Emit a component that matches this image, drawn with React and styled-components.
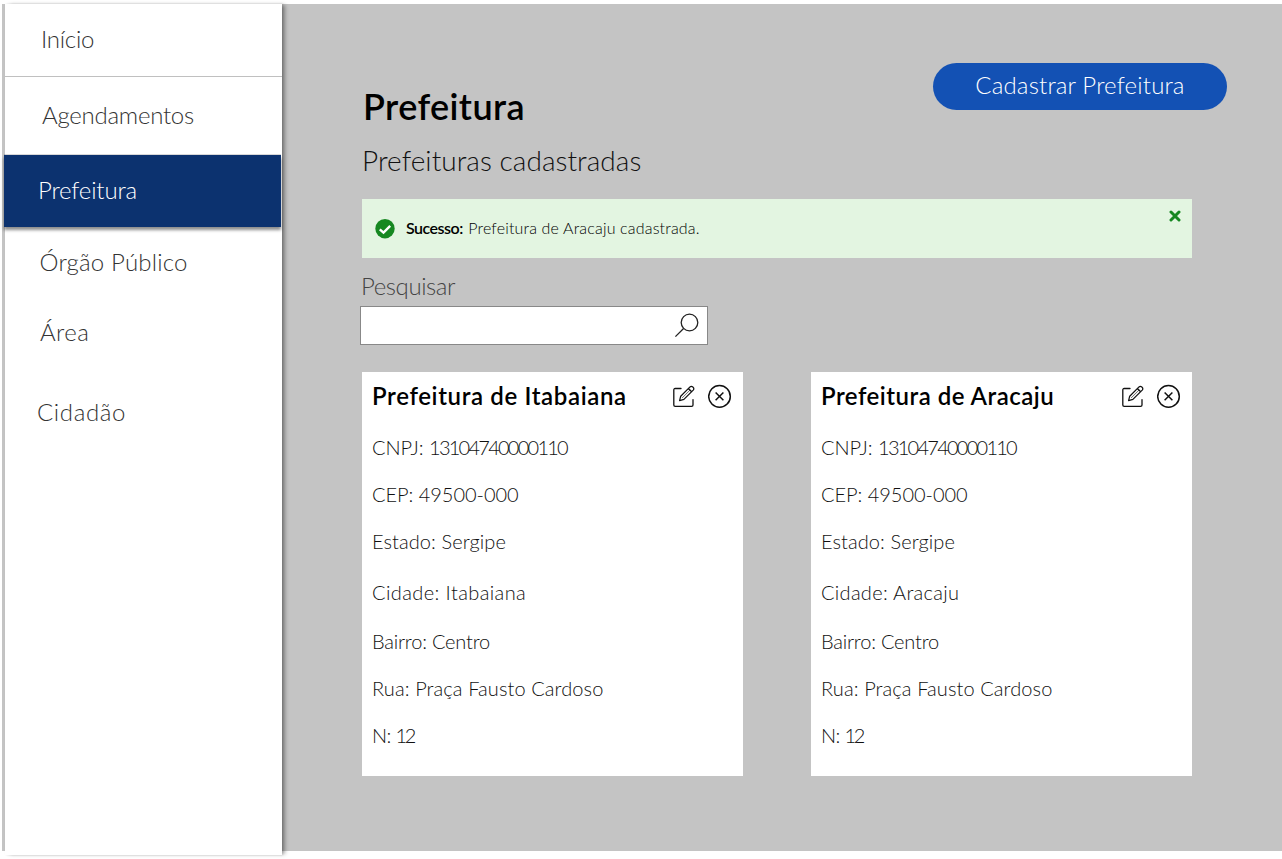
import React from "react";
import styled, { createGlobalStyle } from "styled-components";

const GlobalStyle = createGlobalStyle`
  *, *::before, *::after { box-sizing: border-box; }
  body {
    margin: 0;
    background: #fff;
    font-family: Lato, "Open Sans", sans-serif;
    font-weight: 300;
    color: #000;
  }
  h1, h2, h3, p, ul { margin: 0; padding: 0; }
  button { border: 0; padding: 0; background: none; font: inherit; color: inherit; cursor: pointer; }
`;

const Page = styled.div`
  height: 859px;
  padding: 4px 0 8px 2px;
  overflow: hidden;
`;

const Shell = styled.div`
  display: flex;
  height: 847px;
  padding-left: 3px;
  background: #c4c4c4;
`;

const Sidebar = styled.nav`
  flex: none;
  width: 277px;
  height: 851px;
  background: #fff;
  box-shadow: 4px 0 4px -1px rgba(0, 0, 0, 0.35), 1px 0 2px rgba(0, 0, 0, 0.12);
`;

const NavItem = styled.a`
  display: block;
  height: ${(p) => p.$height}px;
  padding: ${(p) => p.$top}px 0 0 ${(p) => p.$left}px;
  font-size: 24px;
  line-height: 30px;
  letter-spacing: ${(p) => p.$spacing}px;
  white-space: nowrap;
  color: #333;
  ${(p) => p.$divided && "border-bottom: 1px solid #c0c0c0;"}
  ${(p) =>
    p.$active &&
    `
    margin: 0 1px 0 -1px;
    color: #fff;
    background: #0c326f;
    box-shadow: 0 3px 3px rgba(0, 0, 0, 0.45), 0 -1px 0 rgba(0, 0, 0, 0.15);
  `}
`;

const Main = styled.main`
  flex: 1;
  padding: 59px 90px 0 80px;
`;

const Header = styled.header`
  display: flex;
  justify-content: space-between;
  height: 136px;
  margin-right: -35px;
`;

const Title = styled.h1`
  padding: 21px 0 0 1px;
  font-size: 36px;
  font-weight: 600;
  line-height: 44px;
  letter-spacing: 0.4px;
`;

const Subtitle = styled.h2`
  padding-top: 15px;
  font-size: 28px;
  font-weight: 300;
  line-height: 34px;
  letter-spacing: 0.05px;
  color: #111;
`;

const RegisterButton = styled.button`
  width: 294px;
  height: 47px;
  padding-bottom: 4px;
  border-radius: 24px;
  background: #1351b4;
  color: #fff;
  font-size: 24px;
  letter-spacing: 0.16px;
`;

const Alert = styled.div`
  display: flex;
  align-items: center;
  height: 59px;
  padding: 0 11px 0 13px;
  background: #e3f5e1;
  font-size: 16px;
  line-height: 20px;
`;

const AlertText = styled.p`
  flex: 1;
  padding: 0 0 1px 11px;
  letter-spacing: 0.17px;
`;

const Strong = styled.strong`
  margin-right: 1px;
  font-weight: 600;
  letter-spacing: -0.5px;
`;

const CloseButton = styled.button`
  align-self: flex-start;
  display: flex;
  margin-top: 11px;
`;

const SearchLabel = styled.label`
  display: block;
  padding: 13px 0 5px;
  margin-left: -1px;
  font-size: 24px;
  line-height: 30px;
  letter-spacing: -0.42px;
  color: #444;
`;

const SearchBox = styled.div`
  display: flex;
  align-items: center;
  justify-content: flex-end;
  width: 348px;
  height: 39px;
  margin-left: -2px;
  padding: 0 7px 2px 0;
  border: 1px solid #888;
  background: #fff;
`;

const Cards = styled.div`
  display: flex;
  gap: 68px;
  margin-top: 27px;
`;

const Card = styled.article`
  width: 381px;
  height: 404px;
  padding: 9px 11px 0 10px;
  background: #fff;
`;

const CardHeader = styled.div`
  display: flex;
  align-items: center;
  height: 30px;
`;

const CardTitle = styled.h3`
  flex: 1;
  font-size: 24px;
  font-weight: 600;
  line-height: 30px;
  letter-spacing: ${(p) => p.$spacing}px;
  white-space: nowrap;
`;

const Actions = styled.div`
  display: flex;
  align-items: center;
  gap: 13px;
`;

const IconButton = styled.button`
  display: flex;
`;

const Fields = styled.ul`
  padding-top: 1px;
  list-style: none;
`;

const Field = styled.li`
  padding-top: ${(p) => p.$gap}px;
  font-size: 20px;
  line-height: 24px;
  letter-spacing: ${(p) => p.$spacing}px;
  white-space: nowrap;
  color: #111;
`;

const Value = styled.span`
  letter-spacing: ${(p) => p.$spacing}px;
`;

const CheckIcon = () => (
  <svg width="20" height="20" viewBox="0 0 20 20">
    <circle cx="10" cy="9.7" r="9.7" fill="#168821" />
    <path d="M4.8 10.3 8.5 13.7 15.2 6.9" fill="none" stroke="#fff" strokeWidth="2.4" />
  </svg>
);

const CrossIcon = () => (
  <svg width="12" height="12" viewBox="0 0 12 12">
    <path d="M2 2 10 10M10 2 2 10" stroke="#168821" strokeWidth="3" strokeLinecap="round" />
  </svg>
);

const SearchIcon = () => (
  <svg width="26" height="26" viewBox="0 0 26 26" fill="none" stroke="#222" strokeWidth="1.3">
    <circle cx="15.5" cy="10.5" r="8.3" />
    <path d="M9.6 16.5 1.4 24.6" />
  </svg>
);

const EditIcon = () => (
  <svg width="22" height="24" viewBox="0 0 22 24" fill="none" stroke="#111" strokeWidth="1.3" strokeLinejoin="round" strokeLinecap="round">
    <path d="M8 4.5H2.2Q.8 4.5.8 5.9V21Q.8 22.4 2.2 22.4H18.6Q20 22.4 20 21V15.6" />
    <path d="M6.6 16.6 7.7 12.2 17 2.9Q18.4 1.8 19.8 3L20.2 3.4Q21.4 4.7 20.2 6.1L10.9 15.4ZM15.4 4.5 18.6 7.7" strokeWidth="1.25" />
    <path d="M9.4 13.7 17 6.1" strokeWidth=".6" />
  </svg>
);

const RemoveIcon = () => (
  <svg width="24" height="24" viewBox="0 0 24 24" fill="none" stroke="#111" strokeWidth="1.5">
    <circle cx="11.5" cy="12.4" r="10.8" />
    <path d="M7.6 8.5 15.4 16.3M15.4 8.5 7.6 16.3" />
  </svg>
);

const navItems = [
  { label: "Início", height: 73, top: 20, left: 36, spacing: -0.25, divided: true },
  { label: "Agendamentos", height: 78, top: 23, left: 37, spacing: -0.26 },
  { label: "Prefeitura", height: 72, top: 20, left: 34, spacing: -0.18, active: true },
  { label: "Órgão Público", height: 70, top: 20, left: 34.5, spacing: 0.18 },
  { label: "Área", height: 75, top: 20, left: 35, spacing: 0.4 },
  { label: "Cidadão", height: 70, top: 25, left: 32, spacing: 0.63 },
];

const cards = [
  { city: "Itabaiana", titleSpacing: 0.64, citySpacing: 0.4 },
  { city: "Aracaju", titleSpacing: 0.49, citySpacing: 0.3 },
];

const fieldsFor = ({ city, citySpacing }) => [
  { label: "CNPJ:", value: "13104740000110", gap: 23, spacing: 0, valueSpacing: -1.75 },
  { label: "CEP:", value: "49500-000", gap: 23, spacing: -0.04 },
  { label: "Estado:", value: "Sergipe", gap: 23, spacing: 0.08 },
  { label: "Cidade:", value: city, gap: 27, spacing: citySpacing },
  { label: "Bairro:", value: "Centro", gap: 25, spacing: -0.2 },
  { label: "Rua:", value: "Praça Fausto Cardoso", gap: 23, spacing: 0.1 },
  { label: "N:", value: "12", gap: 23, spacing: -0.6, valueSpacing: -2.4 },
];

const PrefeituraCard = ({ data }) => (
  <Card>
    <CardHeader>
      <CardTitle $spacing={data.titleSpacing}>Prefeitura de {data.city}</CardTitle>
      <Actions>
        <IconButton aria-label="Editar"><EditIcon /></IconButton>
        <IconButton aria-label="Remover"><RemoveIcon /></IconButton>
      </Actions>
    </CardHeader>
    <Fields>
      {fieldsFor(data).map((f) => (
        <Field key={f.label} $gap={f.gap} $spacing={f.spacing}>
          {f.label} <Value $spacing={f.valueSpacing ?? f.spacing}>{f.value}</Value>
        </Field>
      ))}
    </Fields>
  </Card>
);

export default function App() {
  return (
    <>
      <GlobalStyle />
      <Page>
        <Shell>
          <Sidebar>
            {navItems.map((item) => (
              <NavItem
                key={item.label}
                $height={item.height}
                $top={item.top}
                $left={item.left}
                $spacing={item.spacing}
                $divided={item.divided}
                $active={item.active}
              >
                {item.label}
              </NavItem>
            ))}
          </Sidebar>
          <Main>
            <Header>
              <div>
                <Title>Prefeitura</Title>
                <Subtitle>Prefeituras cadastradas</Subtitle>
              </div>
              <RegisterButton>Cadastrar Prefeitura</RegisterButton>
            </Header>
            <Alert>
              <CheckIcon />
              <AlertText>
                <Strong>Sucesso:</Strong> Prefeitura de Aracaju cadastrada.
              </AlertText>
              <CloseButton aria-label="Fechar"><CrossIcon /></CloseButton>
            </Alert>
            <SearchLabel>Pesquisar</SearchLabel>
            <SearchBox><SearchIcon /></SearchBox>
            <Cards>
              {cards.map((c) => (
                <PrefeituraCard key={c.city} data={c} />
              ))}
            </Cards>
          </Main>
        </Shell>
      </Page>
    </>
  );
}
